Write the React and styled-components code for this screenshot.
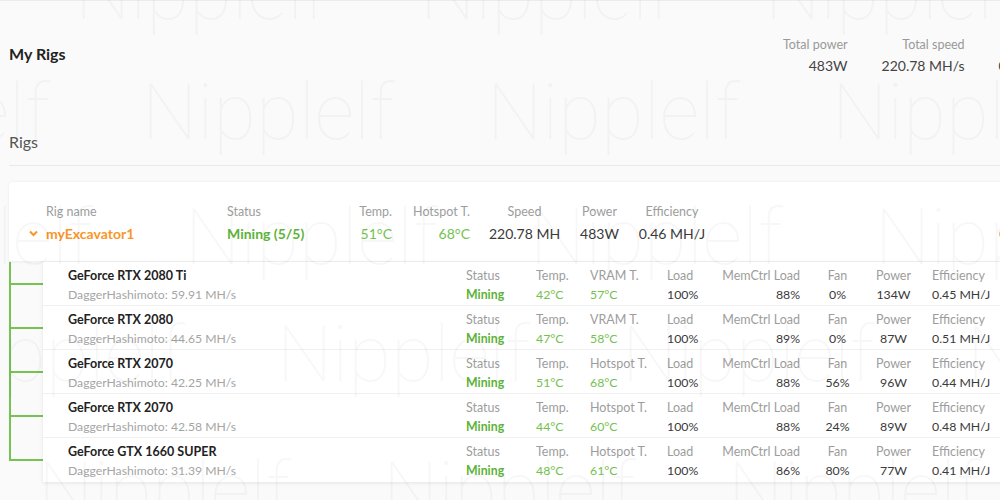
import React from "react";
import styled, { createGlobalStyle } from "styled-components";

const GlobalStyle = createGlobalStyle`
  html, body { margin: 0; padding: 0; background: #fafafa; overflow: hidden; }
  body { font-family: Lato, "Open Sans", sans-serif; color: #444; }
  * { box-sizing: border-box; }
`;

const ORANGE = "#f8962a";
const GREEN = "#5cb338";
const LIGHT_GREEN = "#74c24e";
const TREE = "#76c253";

const Page = styled.div`
  width: 1100px;
  height: 500px;
  border-top: 1px solid #ececec;
  padding-left: 9px;
`;

const Header = styled.header`
  display: grid;
  grid-template-columns: 774px auto;
  align-items: start;
  padding-top: 35px;
`;

const Title = styled.h1`
  margin: 8px 0 0;
  font-size: 16px;
  line-height: 20px;
  font-weight: 700;
  color: #222;
`;

const Stats = styled.div`
  display: flex;
  gap: 34px;
`;

const Stat = styled.div`
  display: flex;
  flex-direction: column;
  align-items: flex-end;
  white-space: nowrap;
`;

const StatLabel = styled.span`
  font-size: 12.5px;
  line-height: 18px;
  color: #999;
`;

const StatValue = styled.span`
  margin-top: 3px;
  font-size: 14px;
  line-height: 18px;
  color: #444;
`;

const SectionTitle = styled.h2`
  margin: 57px 0 0;
  padding-bottom: 13px;
  border-bottom: 1px solid #e9e9e9;
  font-size: 16px;
  line-height: 20px;
  font-weight: 400;
  color: #555;
`;

const Card = styled.section`
  margin-top: 16px;
  background: #fff;
  border-radius: 4px 4px 0 0;
  box-shadow: 0 0 3px rgba(0, 0, 0, 0.07);
`;

const RigHeader = styled.div`
  display: flex;
  height: 80px;
  padding: 21px 0 0 20px;
  border-bottom: 1px solid #f1f1f1;
`;

const ChevronCell = styled.div`
  width: 17px;
  padding-top: 27px;
  line-height: 0;
  color: ${ORANGE};
`;

const RigColumns = styled.div`
  display: flex;
  gap: 20px;
`;

const Col = styled.div`
  width: ${(p) => p.$w}px;
  margin-left: ${(p) => p.$ml || 0}px;
  flex: none;
  display: flex;
  flex-direction: column;
  white-space: nowrap;
  align-items: ${(p) =>
    p.$align === "right" ? "flex-end" : p.$align === "center" ? "center" : "flex-start"};
`;

const Label = styled.span`
  font-size: 12.5px;
  line-height: 18px;
  color: #9d9d9d;
`;

const RigValue = styled.span`
  margin-top: 3px;
  font-size: 14px;
  line-height: 20px;
  color: ${(p) => p.$color || "#3a3a3a"};
  font-weight: ${(p) => (p.$bold ? 700 : 400)};
`;

const GpuSection = styled.div`
  display: flex;
`;

const Tree = styled.div`
  width: 34px;
  flex: none;
`;

const Branch = styled.div`
  height: 44px;
`;

const BranchTop = styled.div`
  height: 23px;
  border-left: 2px solid ${TREE};
  border-bottom: 2px solid ${TREE};
`;

const BranchBottom = styled.div`
  height: 21px;
  border-left: 2px solid ${(p) => (p.$last ? "transparent" : TREE)};
`;

const GpuPanel = styled.div`
  flex: 1;
  background: #fff;
  box-shadow: 0 1px 4px rgba(0, 0, 0, 0.09);
`;

const GpuRow = styled.div`
  display: flex;
  height: 44px;
  padding: 5px 0 0 25px;
  border-bottom: 1px solid ${(p) => (p.$last ? "transparent" : "#f0f0f0")};
`;

const GpuInfo = styled.div`
  width: 398px;
  flex: none;
  display: flex;
  flex-direction: column;
`;

const GpuName = styled.span`
  font-size: 12.5px;
  line-height: 18px;
  font-weight: 700;
  color: #222;
`;

const GpuSub = styled.span`
  margin-top: 1px;
  font-size: 12.2px;
  line-height: 18px;
  color: #a5a5a5;
`;

const GpuValue = styled.span`
  margin-top: 1px;
  font-size: 12.3px;
  line-height: 18px;
  color: ${(p) => p.$color || "#3a3a3a"};
  font-weight: ${(p) => (p.$bold ? 700 : 400)};
`;

const Watermark = styled.div`
  position: fixed;
  inset: 0;
  overflow: hidden;
  pointer-events: none;
  z-index: 5;
`;

const WmRow = styled.div`
  position: absolute;
  display: flex;
  white-space: nowrap;
`;

const WmWord = styled.span`
  width: 345px;
  flex: none;
  font-family: Roboto, "Open Sans", sans-serif;
  font-weight: 100;
  font-size: 78px;
  line-height: 1;
  color: rgba(0, 0, 0, 0.032);
`;

const Chevron = () => (
  <svg width="9" height="7" viewBox="0 0 9 7">
    <polyline points="1,1.5 4.5,5 8,1.5" fill="none" stroke="currentColor" strokeWidth="2" />
  </svg>
);

const gpus = [
  { name: "GeForce RTX 2080 Ti", speed: "59.91", temp: "42°C", hotLabel: "VRAM T.", hot: "57°C", mem: "88%", fan: "0%", power: "134W", eff: "0.45 MH/J" },
  { name: "GeForce RTX 2080", speed: "44.65", temp: "47°C", hotLabel: "VRAM T.", hot: "58°C", mem: "89%", fan: "0%", power: "87W", eff: "0.51 MH/J" },
  { name: "GeForce RTX 2070", speed: "42.25", temp: "51°C", hotLabel: "Hotspot T.", hot: "68°C", mem: "88%", fan: "56%", power: "96W", eff: "0.44 MH/J" },
  { name: "GeForce RTX 2070", speed: "42.58", temp: "44°C", hotLabel: "Hotspot T.", hot: "60°C", mem: "88%", fan: "24%", power: "89W", eff: "0.48 MH/J" },
  { name: "GeForce GTX 1660 SUPER", speed: "31.39", temp: "48°C", hotLabel: "Hotspot T.", hot: "61°C", mem: "86%", fan: "80%", power: "77W", eff: "0.41 MH/J" },
];

const wmRows = [
  { top: -46, left: 75 },
  { top: 74, left: 142 },
  { top: 199, left: 185 },
  { top: 316, left: 277 },
  { top: 452, left: 38 },
];

export default function App() {
  return (
    <>
      <GlobalStyle />
      <Page>
        <Header>
          <Title>My Rigs</Title>
          <Stats>
            <Stat>
              <StatLabel>Total power</StatLabel>
              <StatValue>483W</StatValue>
            </Stat>
            <Stat>
              <StatLabel>Total speed</StatLabel>
              <StatValue>220.78 MH/s</StatValue>
            </Stat>
            <Stat>
              <StatLabel>Unpaid</StatLabel>
              <StatValue>0.00012345 BTC</StatValue>
            </Stat>
          </Stats>
        </Header>

        <SectionTitle>Rigs</SectionTitle>

        <Card>
          <RigHeader>
            <ChevronCell>
              <Chevron />
            </ChevronCell>
            <RigColumns>
              <Col $w={161}>
                <Label>Rig name</Label>
                <RigValue $color={ORANGE} $bold>myExcavator1</RigValue>
              </Col>
              <Col $w={111}>
                <Label>Status</Label>
                <RigValue $color={GREEN} $bold>Mining (5/5)</RigValue>
              </Col>
              <Col $w={34} $align="right">
                <Label>Temp.</Label>
                <RigValue $color={LIGHT_GREEN}>51°C</RigValue>
              </Col>
              <Col $w={58} $align="right">
                <Label>Hotspot T.</Label>
                <RigValue $color={LIGHT_GREEN}>68°C</RigValue>
              </Col>
              <Col $w={69} $align="center">
                <Label>Speed</Label>
                <RigValue>220.78 MH</RigValue>
              </Col>
              <Col $w={41} $align="center">
                <Label>Power</Label>
                <RigValue>483W</RigValue>
              </Col>
              <Col $w={64} $align="center">
                <Label>Efficiency</Label>
                <RigValue>0.46 MH/J</RigValue>
              </Col>
              <Col $w={90} $align="center" $ml={275}>
                <Label>Profit</Label>
                <RigValue>0.000231 BTC</RigValue>
              </Col>
            </RigColumns>
          </RigHeader>
        </Card>

        <GpuSection>
          <Tree>
            {gpus.map((g, i) => (
              <Branch key={i}>
                <BranchTop />
                <BranchBottom $last={i === gpus.length - 1} />
              </Branch>
            ))}
          </Tree>
          <GpuPanel>
            {gpus.map((g, i) => (
              <GpuRow key={i} $last={i === gpus.length - 1}>
                <GpuInfo>
                  <GpuName>{g.name}</GpuName>
                  <GpuSub>DaggerHashimoto: {g.speed} MH/s</GpuSub>
                </GpuInfo>
                <Col $w={70}>
                  <Label>Status</Label>
                  <GpuValue $color={GREEN} $bold>Mining</GpuValue>
                </Col>
                <Col $w={54}>
                  <Label>Temp.</Label>
                  <GpuValue $color={LIGHT_GREEN}>{g.temp}</GpuValue>
                </Col>
                <Col $w={77}>
                  <Label>{g.hotLabel}</Label>
                  <GpuValue $color={LIGHT_GREEN}>{g.hot}</GpuValue>
                </Col>
                <Col $w={55}>
                  <Label>Load</Label>
                  <GpuValue>100%</GpuValue>
                </Col>
                <Col $w={78} $align="right">
                  <Label>MemCtrl Load</Label>
                  <GpuValue>{g.mem}</GpuValue>
                </Col>
                <Col $w={75} $align="center">
                  <Label>Fan</Label>
                  <GpuValue>{g.fan}</GpuValue>
                </Col>
                <Col $w={37} $align="center">
                  <Label>Power</Label>
                  <GpuValue>{g.power}</GpuValue>
                </Col>
                <Col $w={80} $ml={20}>
                  <Label>Efficiency</Label>
                  <GpuValue>{g.eff}</GpuValue>
                </Col>
              </GpuRow>
            ))}
          </GpuPanel>
        </GpuSection>
      </Page>

      <Watermark aria-hidden="true">
        {wmRows.map((r, i) => (
          <WmRow key={i} style={{ top: r.top, left: r.left - 345 }}>
            {[0, 1, 2, 3, 4].map((k) => (
              <WmWord key={k}>Nipplelf</WmWord>
            ))}
          </WmRow>
        ))}
      </Watermark>
    </>
  );
}
